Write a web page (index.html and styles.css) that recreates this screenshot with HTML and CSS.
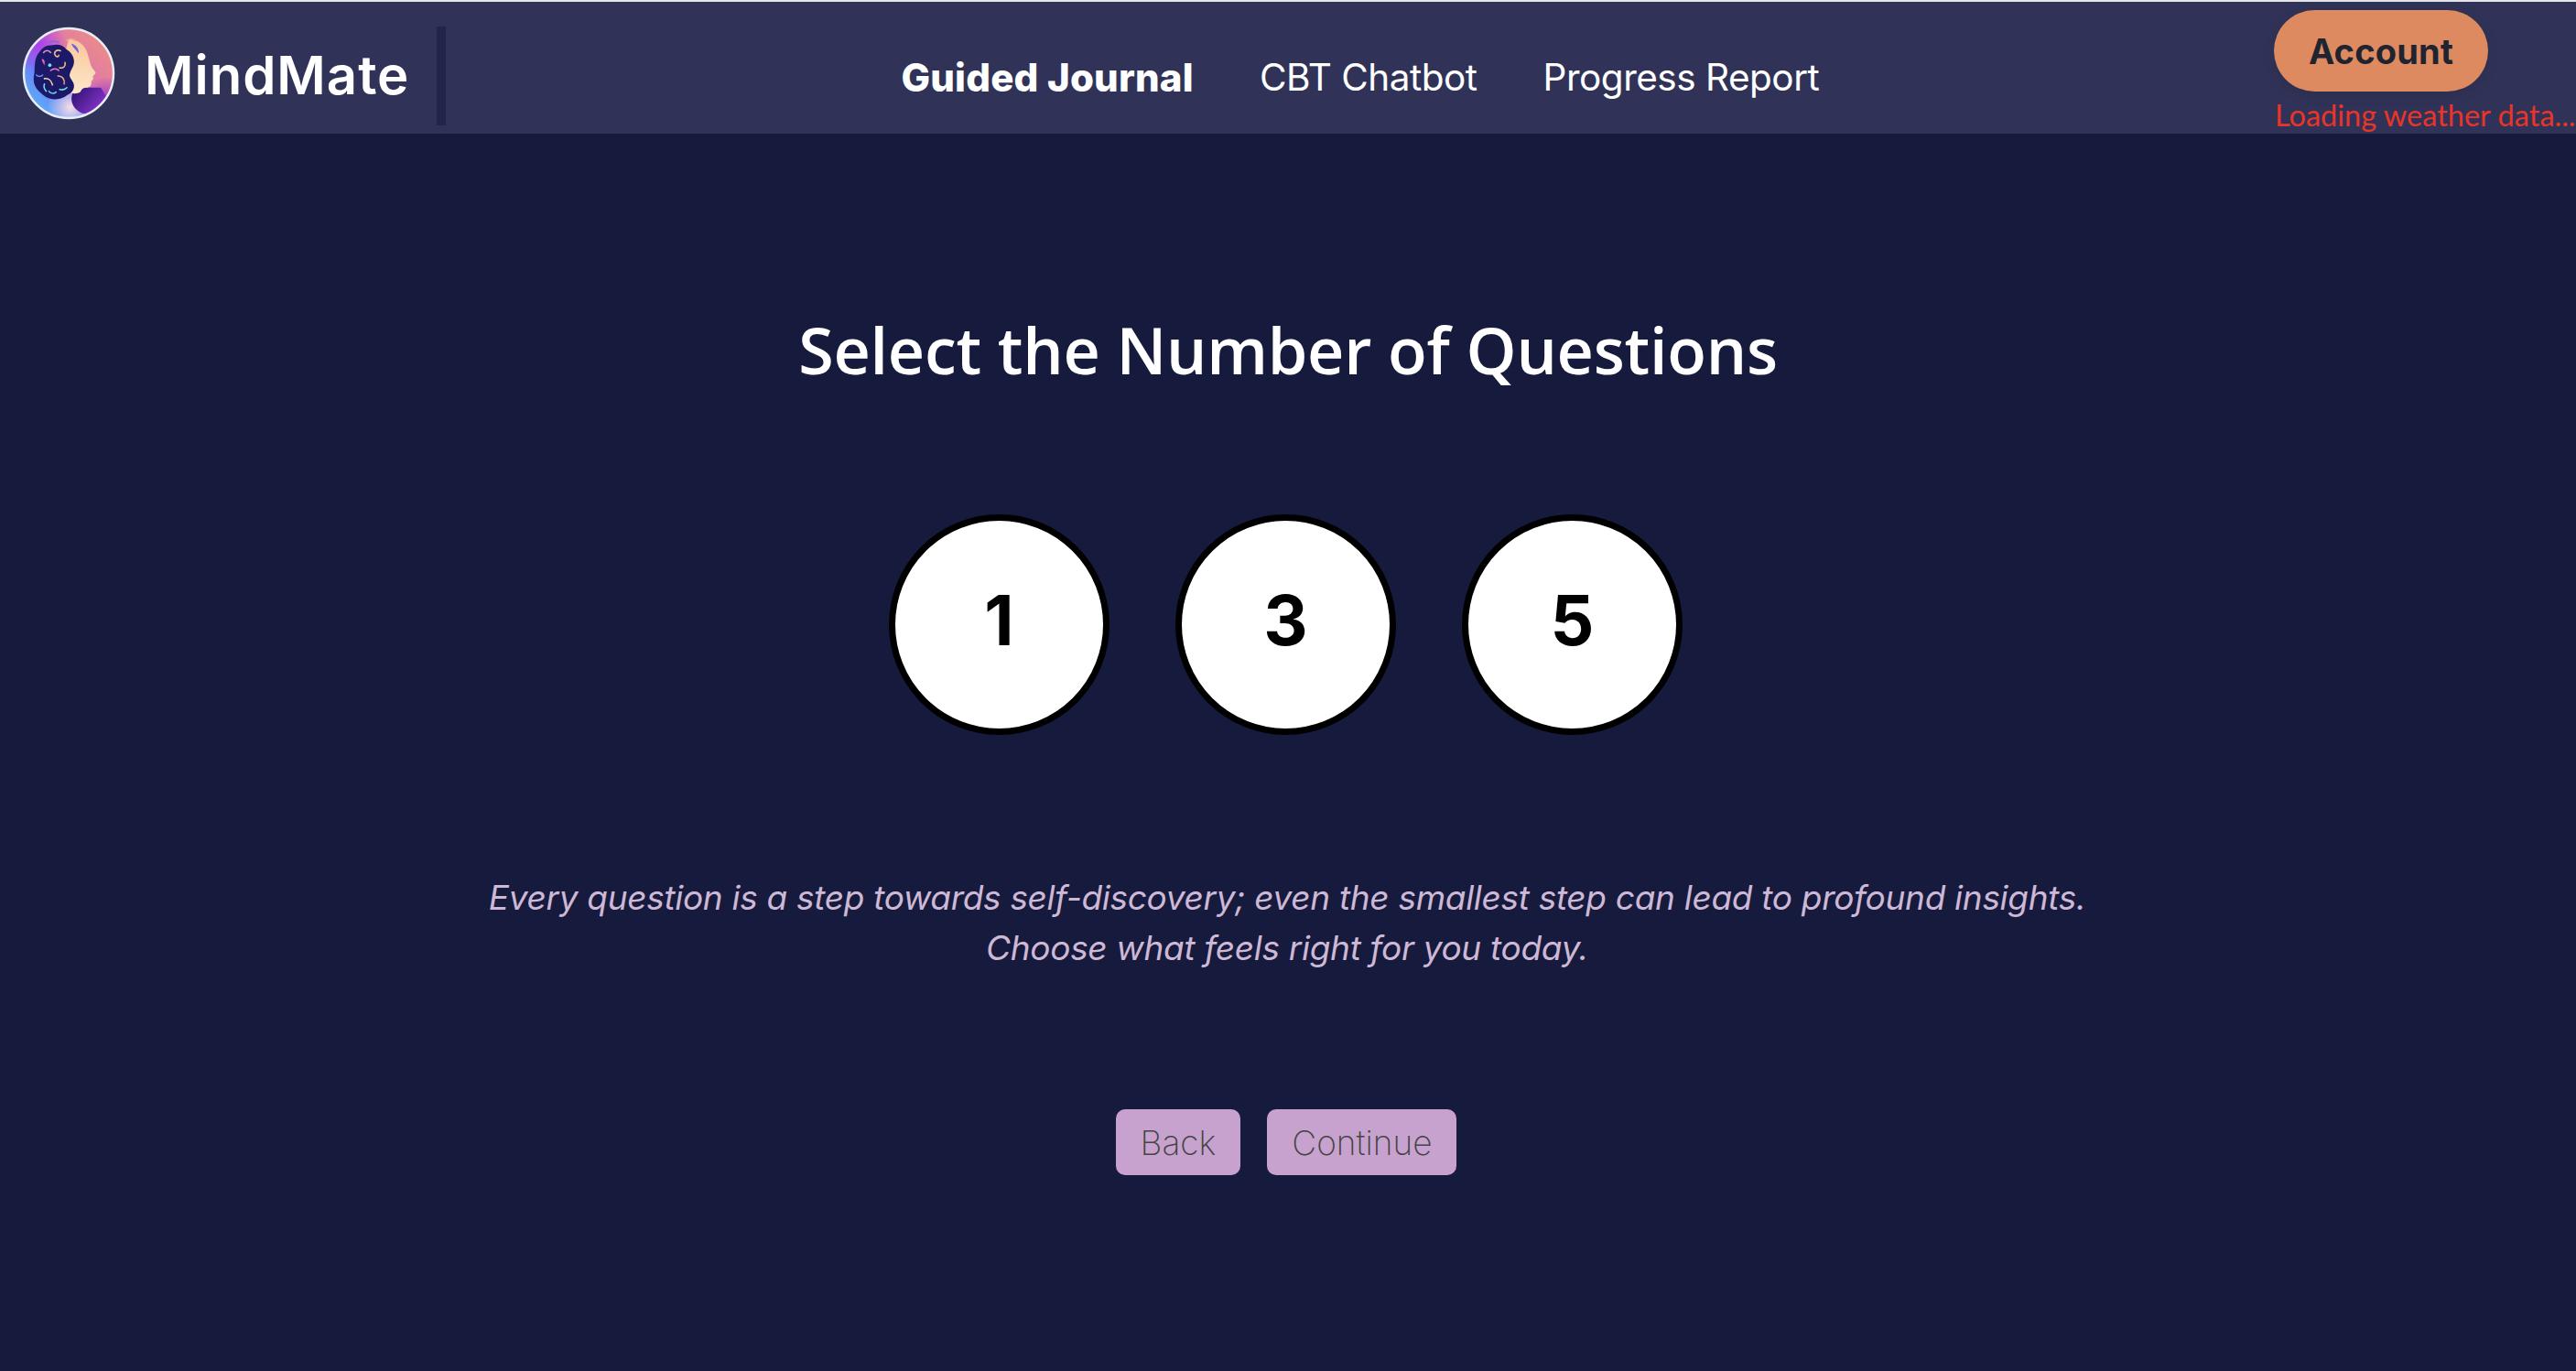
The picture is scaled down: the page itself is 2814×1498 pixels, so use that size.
FILE: index.html
```html
<!DOCTYPE html>
<html lang="en">
<head>
    <meta charset="UTF-8">
    <meta name="viewport" content="width=device-width, initial-scale=1.0">
    <title>MindMate</title>
    <link rel="stylesheet" href="styles.css">
</head>
<body>
    <header class="navbar">
        <div class="brand">
            <svg class="logo" viewBox="0 0 104 104" aria-hidden="true">
                <defs>
                    <linearGradient id="discFill" x1="0" y1="1" x2="1" y2="0">
                        <stop offset="0" stop-color="#55c8fb"/>
                        <stop offset="0.36" stop-color="#6a80f4"/>
                        <stop offset="0.58" stop-color="#e07aa8"/>
                        <stop offset="1" stop-color="#f29478"/>
                    </linearGradient>
                    <radialGradient id="glowPurple">
                        <stop offset="0" stop-color="#a83cf0" stop-opacity="0.95"/>
                        <stop offset="1" stop-color="#a83cf0" stop-opacity="0"/>
                    </radialGradient>
                    <radialGradient id="glowViolet">
                        <stop offset="0" stop-color="#9434cc"/>
                        <stop offset="1" stop-color="#9434cc" stop-opacity="0"/>
                    </radialGradient>
                    <radialGradient id="glowPale">
                        <stop offset="0" stop-color="#f6dfe6"/>
                        <stop offset="1" stop-color="#f6dfe6" stop-opacity="0"/>
                    </radialGradient>
                    <linearGradient id="faceFill" x1="0.5" y1="0" x2="0.4" y2="1">
                        <stop offset="0" stop-color="#f9c69a"/>
                        <stop offset="1" stop-color="#fde8cc"/>
                    </linearGradient>
                    <linearGradient id="neckFill" x1="0" y1="0" x2="1" y2="0.6">
                        <stop offset="0" stop-color="#28106a"/>
                        <stop offset="1" stop-color="#8a35d0"/>
                    </linearGradient>
                    <clipPath id="discClip">
                        <circle cx="52" cy="52" r="50"/>
                    </clipPath>
                </defs>
                <g clip-path="url(#discClip)">
                    <rect width="104" height="104" fill="url(#discFill)"/>
                    <circle cx="18" cy="20" r="32" fill="url(#glowPurple)"/>
                    <circle cx="94" cy="84" r="28" fill="url(#glowViolet)"/>
                    <circle cx="54" cy="90" r="26" fill="url(#glowPale)"/>
                    <path d="M58 72 C52 80 56 92 66 96 C74 99 84 94 96 82 L88 68 L70 68Z" fill="url(#neckFill)"/>
                    <path d="M52 14 C62 14 70 20 73 30 C75 36 76 42 78 46 L82 51 C82 54 79 54 79 56 C80 59 78 60 77 61 C78 65 76 68 72 68 C68 68 66 70 65 73 C62 75 58 75 54 74 L48 30Z" fill="url(#faceFill)"/>
                </g>
                <path d="M14 49 C14 38 16 32 19 29 C23 23 28 20 33 21 C40 19 46 21 49 25 C54 28 58 33 58 39 C58 45 54 48 53 54 C53 58 58 61 58 66 C58 71 55 74 51 76 C46 80 41 81 36 81 C30 81 25 78 21 74 C16 70 13 65 13 59 C13 55 14 52 14 49Z" fill="#1c1a68"/>
                <g fill="none" stroke-width="1.6" stroke-linecap="round">
                    <path d="M31 18 C34 16 38 16 41 18" stroke="#7a68d8"/>
                    <path d="M24 29 C26 26 30 26 32 29" stroke="#e88fc0"/>
                    <path d="M43 27 C38 25 35 29 37 32 C38 34 41 34 41 32" stroke="#f0b88a"/>
                    <path d="M48 40 C49 44 46 47 42 46" stroke="#f3c27a"/>
                    <path d="M32 49 C35 46 39 47 41 49" stroke="#e87fb0"/>
                    <path d="M40 55 C45 55 48 59 47 64" stroke="#f0a878"/>
                    <path d="M25 58 C30 57 33 61 34 65" stroke="#f5d4a8"/>
                    <path d="M25 64 C24 67 25 70 27 72" stroke="#6fd8ee"/>
                    <path d="M30 72 C32 75 36 75 38 73" stroke="#6fc8ee"/>
                    <path d="M42 70 C45 71 48 70 50 68" stroke="#6fe0d8"/>
                    <path d="M16 54 C18 56 21 56 23 54" stroke="#6f90ee"/>
                </g>
                <path d="M22 36 C25 36 26 39 25 43 C24 41 22 39 22 36Z" fill="#f060b0"/>
                <circle cx="31" cy="43" r="1.9" fill="#6fe0f0"/>
                <path d="M55 19 C60 20 64 25 63 30 C61 26 57 24 55 19Z" fill="#6a60e0"/>
                <path d="M49 16 C52 13 57 13 60 16" fill="none" stroke="#f2a08a" stroke-width="1.5"/>
                <circle cx="52" cy="52" r="50" fill="none" stroke="#e8eef6" stroke-width="2.5"/>
            </svg>
            <span class="brand-name">MindMate</span>
            <span class="brand-divider"></span>
        </div>
        <nav class="nav-links">
            <a class="nav-link active" href="#">Guided Journal</a>
            <a class="nav-link" href="#">CBT Chatbot</a>
            <a class="nav-link" href="#">Progress Report</a>
        </nav>
        <div class="account-area">
            <button class="account-btn" type="button">Account</button>
            <div class="weather">Loading weather data...</div>
        </div>
    </header>

    <main class="content">
        <h1 class="title">Select the Number of Questions</h1>
        <div class="choices">
            <button class="choice" type="button">1</button>
            <button class="choice" type="button">3</button>
            <button class="choice" type="button">5</button>
        </div>
        <p class="quote">Every question is a step towards self-discovery; even the smallest step can lead to profound insights.<br>Choose what feels right for you today.</p>
        <div class="actions">
            <button class="action-btn" type="button">Back</button>
            <button class="action-btn" type="button">Continue</button>
        </div>
    </main>
</body>
</html>
```

FILE: styles.css
```css
* {
    box-sizing: border-box;
}

html, body {
    height: 100%;
}

body {
    margin: 0;
    display: flex;
    flex-direction: column;
    background: #161a3c;
    border-top: 2px solid #e4e5e8;
    font-family: 'Inter', sans-serif;
    overflow: hidden;
}

/* Top bar */
.navbar {
    display: flex;
    height: 144px;
    background: #303357;
    flex-shrink: 0;
}

.brand {
    display: flex;
    align-items: center;
    padding: 12px 0 0 24px;
}

.logo {
    width: 102px;
    height: 102px;
    flex-shrink: 0;
}

.brand-name {
    margin: 4px 0 0 32px;
    font-size: 58px;
    font-weight: 600;
    letter-spacing: 1px;
    color: #fff;
}

.brand-divider {
    width: 10px;
    height: 108px;
    margin: 6px 0 0 30px;
    background: #222548;
}

.nav-links {
    display: flex;
    align-items: center;
    gap: 72px;
    margin-left: 497px;
    padding-top: 20px;
}

.nav-link {
    font-size: 40.5px;
    letter-spacing: -0.5px;
    color: #fff;
    text-decoration: none;
}

.nav-link.active {
    font-size: 42px;
    font-weight: 800;
    letter-spacing: 0.2px;
}

.account-area {
    display: flex;
    flex-direction: column;
    align-items: flex-start;
    width: 330px;
    margin-left: auto;
    padding-top: 9px;
}

.account-btn {
    width: 234px;
    height: 90px;
    border: none;
    border-radius: 45px;
    background: #dd8a60;
    box-shadow: 0 4px 14px rgba(0, 0, 0, 0.1);
    color: #1f2430;
    font-family: 'Inter', sans-serif;
    font-size: 38px;
    font-weight: 700;
    letter-spacing: 0.2px;
}

.weather {
    margin: 6px 0 0 1px;
    font-family: 'Lato', sans-serif;
    font-size: 32.5px;
    line-height: 40px;
    color: #e83528;
    white-space: nowrap;
}

/* Main section */
.content {
    display: flex;
    flex-direction: column;
    align-items: center;
    flex: 1;
}

.title {
    margin: 188px 0 0;
    font-family: 'Open Sans', sans-serif;
    font-size: 70px;
    line-height: 96px;
    font-weight: 600;
    letter-spacing: -0.25px;
    color: #fff;
}

.choices {
    display: flex;
    gap: 72px;
    margin: 132px 0 0 -5px;
}

.choice {
    width: 241px;
    height: 241px;
    padding: 0 0 10px;
    border: 7px solid #000;
    border-radius: 50%;
    background: #fff;
    color: #000;
    font-family: 'Inter', sans-serif;
    font-size: 75px;
    font-weight: 700;
}

.quote {
    margin: 150px 0 0 -2px;
    font-size: 37px;
    line-height: 55px;
    font-style: italic;
    letter-spacing: -0.3px;
    text-align: center;
    color: #cdb8d6;
}

.actions {
    display: flex;
    gap: 29px;
    margin: 149px 0 0 -4px;
}

.action-btn {
    height: 72px;
    padding: 0 27px;
    border: none;
    border-radius: 10px;
    background: #c8a2cf;
    color: #444;
    font-family: 'Inter', sans-serif;
    font-size: 37px;
    font-weight: 200;
}
```
